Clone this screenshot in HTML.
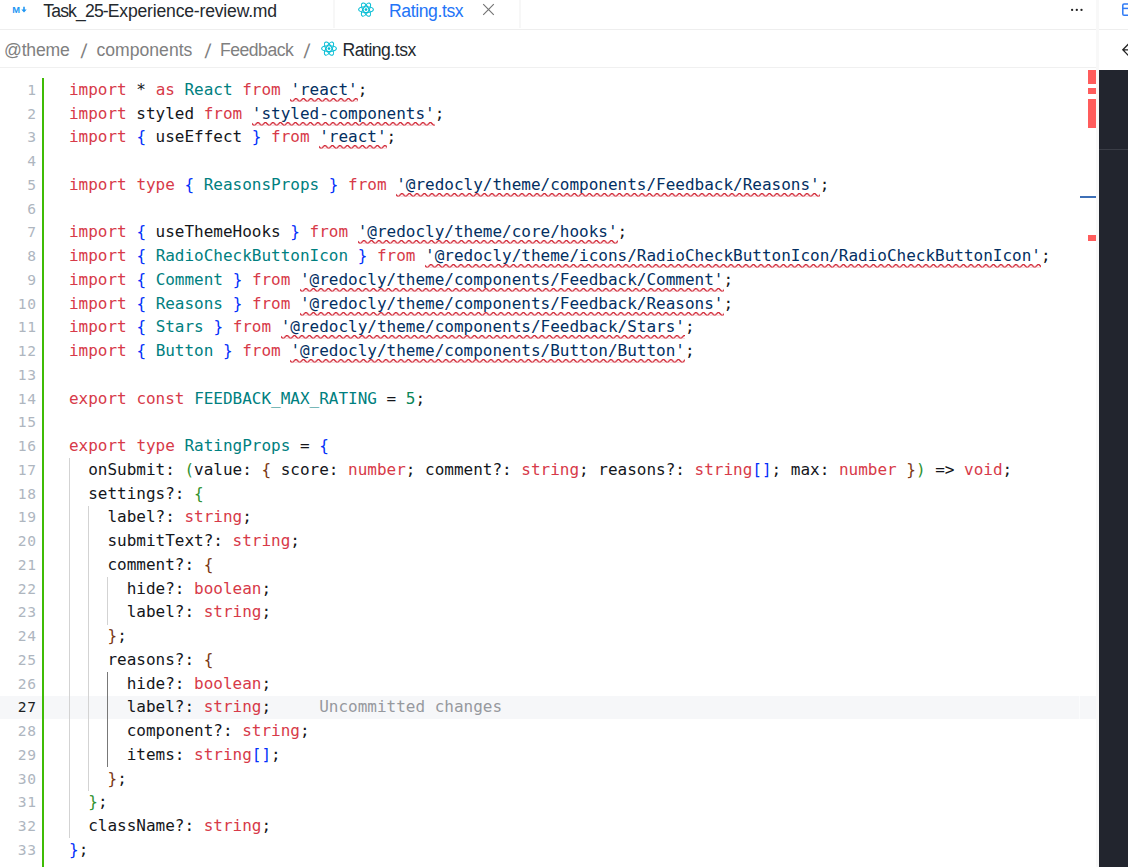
<!DOCTYPE html>
<html lang="en"><head><meta charset="utf-8"><title>Rating.tsx</title>
<style>
html,body{margin:0;padding:0;}
body{width:1128px;height:867px;overflow:hidden;background:#fff;position:relative;font-family:"Liberation Sans",sans-serif;}
.abs{position:absolute;}
#tabs{left:0;top:0;width:1128px;height:29px;border-bottom:1px solid #eeeeee;}
.tabsep{position:absolute;top:0;width:2px;height:28px;background:#f7f7f7;}
.tabtxt{position:absolute;font-size:17.6px;line-height:20px;white-space:nowrap;color:#24292e;}
#crumbs{left:0;top:30px;width:1096px;height:37px;border-bottom:1px solid #f0f0f0;}
.crumb{position:absolute;top:39.8px;font-size:17.6px;line-height:20px;color:#808080;white-space:nowrap;}
.crumb.sl{font-size:20px;top:41.2px;margin-left:0.6px;transform:skewX(-5deg);}
#code{left:69px;top:0;font-family:"DejaVu Sans Mono","Liberation Mono",monospace;font-size:16px;letter-spacing:-0.01px;line-height:23.75px;color:#14161b;white-space:pre;}
.ln{position:absolute;left:0;height:23.75px;}
#nums{left:0;top:0;width:36.7px;font-family:"DejaVu Sans Mono","Liberation Mono",monospace;font-size:14.6px;letter-spacing:0.7px;line-height:23.75px;color:#aeb6bf;text-align:right;}
.num{position:absolute;right:0;height:23.75px;}
.num.cur{color:#1b1f23;}
.k{color:#d73a49;}
.s{color:#032f62;}
.t{color:#008080;}
.b1{color:#0431fa;}
.b2{color:#319331;}
.b3{color:#7b3814;}
.n{color:#098658;}
.g{color:#96999e;}
.q{text-decoration:underline wavy #e0242f 1px;text-underline-offset:4px;text-decoration-skip-ink:none;}
#curline{left:0;top:696px;width:1096px;height:23px;background:#f6f7f9;}
#gitbar{left:42px;top:78px;width:2px;height:789px;background:#3fbc05;}
.guide{position:absolute;width:1px;background:#d3d3d3;}
.guide.act{background:#787878;}
#vsep{left:1096px;top:0;width:3px;height:867px;background:#f8f8f8;}
#rpanel{left:1099px;top:70px;width:29px;height:797px;background:#22252e;}
#rline{left:1099px;top:149px;width:29px;height:1px;background:#3a3d46;}
.mk{position:absolute;background:#ff5c5c;}
</style></head><body>
<div id="curline" class="abs"></div>
<div id="tabs" class="abs"></div>
<div class="tabsep" style="left:333px"></div>
<div class="tabsep" style="left:519px"></div>
<div class="tabtxt" style="left:43.3px;top:0.8px;letter-spacing:-0.2px"><span style="letter-spacing:-0.86px">Task_25-</span>Experience-review.md</div>
<div class="tabtxt" style="left:389px;top:0.8px;color:#2374f7;letter-spacing:-0.4px">Rating.tsx</div>
<svg class="abs" style="left:10px;top:4px" width="20" height="12" viewBox="0 0 20 12"><text x="2.2" y="8.6" font-family="Liberation Sans,sans-serif" font-weight="bold" font-size="8.6" textLength="7.8" lengthAdjust="spacingAndGlyphs" fill="#2196f3">M</text><path d="M13.2 2.7h1.6v2.9h1.9l-2.7 3-2.7-3h1.9z" fill="#2196f3"/></svg>
<svg class="abs" style="left:357.8px;top:1.9px" viewBox="-11.5 -10.9 23 21.8" width="16" height="15.2"><circle r="1.9" fill="#00bcd4"/><g stroke="#00bcd4" stroke-width="1.5" fill="none"><ellipse rx="10.6" ry="4.1"/><ellipse rx="10.6" ry="4.1" transform="rotate(60)"/><ellipse rx="10.6" ry="4.1" transform="rotate(120)"/></g></svg>
<svg class="abs" style="left:482px;top:3px" width="13" height="13" viewBox="0 0 13 13"><path d="M1.2 1.2l10.6 10.6M11.8 1.2l-10.6 10.6" stroke="#747474" stroke-width="1.15" fill="none"/></svg>
<svg class="abs" style="left:1066px;top:4px" width="22" height="12" viewBox="0 0 22 12"><circle cx="6.1" cy="5.9" r="1.15" fill="#222"/><circle cx="10.8" cy="5.9" r="1.15" fill="#222"/><circle cx="15.5" cy="5.9" r="1.15" fill="#222"/></svg>
<div id="crumbs" class="abs"></div>
<div class="crumb" style="left:4px;letter-spacing:-0.2px">@theme</div>
<div class="crumb sl" style="left:80px">/</div>
<div class="crumb" style="left:96.5px;letter-spacing:0px">components</div>
<div class="crumb sl" style="left:204px">/</div>
<div class="crumb" style="left:220px;letter-spacing:-0.5px">Feedback</div>
<div class="crumb sl" style="left:303px">/</div>
<svg class="abs" style="left:320.5px;top:41.3px" viewBox="-11.5 -10.9 23 21.8" width="16" height="15.2"><circle r="1.9" fill="#00bcd4"/><g stroke="#00bcd4" stroke-width="1.5" fill="none"><ellipse rx="10.6" ry="4.1"/><ellipse rx="10.6" ry="4.1" transform="rotate(60)"/><ellipse rx="10.6" ry="4.1" transform="rotate(120)"/></g></svg>
<div class="crumb" style="left:342.5px;color:#24292e;letter-spacing:-0.5px">Rating.tsx</div>
<div id="gitbar" class="abs"></div>
<div class="guide " style="left:69px;top:458.25px;height:380.0px"></div><div class="guide " style="left:88px;top:505.75px;height:285.0px"></div><div class="guide " style="left:107px;top:577.0px;height:47.5px"></div><div class="guide act" style="left:107px;top:672.0px;height:95.0px"></div>
<svg class="abs" style="left:0;top:0" width="1096" height="867" viewBox="0 0 1096 867"><defs><pattern id="sq" width="7.5" height="3.75" patternUnits="userSpaceOnUse"><g fill="#cf1b2b" transform="scale(1.25)"><polygon points="5.5,0 2.5,3 1.1,3 4.1,0"/><polygon points="4,0 6,2 6,0.6 5.4,0"/><polygon points="0,2 1,3 2.4,3 0,0.6"/></g></pattern></defs><g transform="translate(290.00,98.00)"><rect width="68.00" height="3.75" fill="url(#sq)"/></g><g transform="translate(252.00,122.00)"><rect width="183.00" height="3.75" fill="url(#sq)"/></g><g transform="translate(319.00,145.00)"><rect width="68.00" height="3.75" fill="url(#sq)"/></g><g transform="translate(396.00,193.00)"><rect width="424.00" height="3.75" fill="url(#sq)"/></g><g transform="translate(358.00,240.00)"><rect width="260.00" height="3.75" fill="url(#sq)"/></g><g transform="translate(425.00,264.00)"><rect width="616.00" height="3.75" fill="url(#sq)"/></g><g transform="translate(300.00,288.00)"><rect width="424.00" height="3.75" fill="url(#sq)"/></g><g transform="translate(300.00,312.00)"><rect width="424.00" height="3.75" fill="url(#sq)"/></g><g transform="translate(281.00,335.00)"><rect width="404.00" height="3.75" fill="url(#sq)"/></g><g transform="translate(290.00,359.00)"><rect width="395.00" height="3.75" fill="url(#sq)"/></g></svg>
<div id="nums" class="abs">
<div class="num" style="top:78px">1</div>
<div class="num" style="top:102px">2</div>
<div class="num" style="top:125px">3</div>
<div class="num" style="top:149px">4</div>
<div class="num" style="top:173px">5</div>
<div class="num" style="top:197px">6</div>
<div class="num" style="top:220px">7</div>
<div class="num" style="top:244px">8</div>
<div class="num" style="top:268px">9</div>
<div class="num" style="top:292px">10</div>
<div class="num" style="top:315px">11</div>
<div class="num" style="top:339px">12</div>
<div class="num" style="top:363px">13</div>
<div class="num" style="top:387px">14</div>
<div class="num" style="top:410px">15</div>
<div class="num" style="top:434px">16</div>
<div class="num" style="top:458px">17</div>
<div class="num" style="top:482px">18</div>
<div class="num" style="top:505px">19</div>
<div class="num" style="top:529px">20</div>
<div class="num" style="top:553px">21</div>
<div class="num" style="top:577px">22</div>
<div class="num" style="top:600px">23</div>
<div class="num" style="top:624px">24</div>
<div class="num" style="top:648px">25</div>
<div class="num" style="top:672px">26</div>
<div class="num cur" style="top:695px">27</div>
<div class="num" style="top:719px">28</div>
<div class="num" style="top:743px">29</div>
<div class="num" style="top:767px">30</div>
<div class="num" style="top:790px">31</div>
<div class="num" style="top:814px">32</div>
<div class="num" style="top:838px">33</div>
</div>
<div id="code" class="abs"><div class="ln" style="top:78px"><span class="k">import</span> * <span class="k">as</span> <span class="t">React</span> <span class="k">from</span> <span class="s">'react'</span>;</div><div class="ln" style="top:102px"><span class="k">import</span> styled <span class="k">from</span> <span class="s">'styled-components'</span>;</div><div class="ln" style="top:125px"><span class="k">import</span> <span class="b1">{</span> useEffect <span class="b1">}</span> <span class="k">from</span> <span class="s">'react'</span>;</div><div class="ln" style="top:149px"></div><div class="ln" style="top:173px"><span class="k">import</span> <span class="k">type</span> <span class="b1">{</span> <span class="t">ReasonsProps</span> <span class="b1">}</span> <span class="k">from</span> <span class="s">'@redocly/theme/components/Feedback/Reasons'</span>;</div><div class="ln" style="top:197px"></div><div class="ln" style="top:220px"><span class="k">import</span> <span class="b1">{</span> useThemeHooks <span class="b1">}</span> <span class="k">from</span> <span class="s">'@redocly/theme/core/hooks'</span>;</div><div class="ln" style="top:244px"><span class="k">import</span> <span class="b1">{</span> <span class="t">RadioCheckButtonIcon</span> <span class="b1">}</span> <span class="k">from</span> <span class="s">'@redocly/theme/icons/RadioCheckButtonIcon/RadioCheckButtonIcon'</span>;</div><div class="ln" style="top:268px"><span class="k">import</span> <span class="b1">{</span> <span class="t">Comment</span> <span class="b1">}</span> <span class="k">from</span> <span class="s">'@redocly/theme/components/Feedback/Comment'</span>;</div><div class="ln" style="top:292px"><span class="k">import</span> <span class="b1">{</span> <span class="t">Reasons</span> <span class="b1">}</span> <span class="k">from</span> <span class="s">'@redocly/theme/components/Feedback/Reasons'</span>;</div><div class="ln" style="top:315px"><span class="k">import</span> <span class="b1">{</span> <span class="t">Stars</span> <span class="b1">}</span> <span class="k">from</span> <span class="s">'@redocly/theme/components/Feedback/Stars'</span>;</div><div class="ln" style="top:339px"><span class="k">import</span> <span class="b1">{</span> <span class="t">Button</span> <span class="b1">}</span> <span class="k">from</span> <span class="s">'@redocly/theme/components/Button/Button'</span>;</div><div class="ln" style="top:363px"></div><div class="ln" style="top:387px"><span class="k">export</span> <span class="k">const</span> <span class="t">FEEDBACK_MAX_RATING</span> = <span class="n">5</span>;</div><div class="ln" style="top:410px"></div><div class="ln" style="top:434px"><span class="k">export</span> <span class="k">type</span> <span class="t">RatingProps</span> = <span class="b1">{</span></div><div class="ln" style="top:458px">  onSubmit: <span class="b2">(</span>value: <span class="b3">{</span> score: <span class="k">number</span>; comment?: <span class="k">string</span>; reasons?: <span class="k">string</span><span class="b1">[]</span>; max: <span class="k">number</span> <span class="b3">}</span><span class="b2">)</span> =&gt; <span class="k">void</span>;</div><div class="ln" style="top:482px">  settings?: <span class="b2">{</span></div><div class="ln" style="top:505px">    label?: <span class="k">string</span>;</div><div class="ln" style="top:529px">    submitText?: <span class="k">string</span>;</div><div class="ln" style="top:553px">    comment?: <span class="b3">{</span></div><div class="ln" style="top:577px">      hide?: <span class="k">boolean</span>;</div><div class="ln" style="top:600px">      label?: <span class="k">string</span>;</div><div class="ln" style="top:624px">    <span class="b3">}</span>;</div><div class="ln" style="top:648px">    reasons?: <span class="b3">{</span></div><div class="ln" style="top:672px">      hide?: <span class="k">boolean</span>;</div><div class="ln" style="top:695px">      label?: <span class="k">string</span>;<span class="g">     Uncommitted changes</span></div><div class="ln" style="top:719px">      component?: <span class="k">string</span>;</div><div class="ln" style="top:743px">      items: <span class="k">string</span><span class="b1">[]</span>;</div><div class="ln" style="top:767px">    <span class="b3">}</span>;</div><div class="ln" style="top:790px">  <span class="b2">}</span>;</div><div class="ln" style="top:814px">  className?: <span class="k">string</span>;</div><div class="ln" style="top:838px"><span class="b1">}</span>;</div></div>
<div class="mk" style="left:1088.4px;top:70px;width:7.6px;height:13.8px"></div>
<div class="mk" style="left:1088.4px;top:88.1px;width:7.6px;height:5.8px"></div>
<div class="mk" style="left:1088.4px;top:98.8px;width:7.6px;height:29.2px"></div>
<div class="mk" style="left:1088.4px;top:234.9px;width:7.6px;height:6.2px"></div>
<div class="abs" style="left:1080px;top:195.7px;width:16px;height:2.2px;background:#3d6fb6"></div>
<div class="abs" style="left:1079px;top:696px;width:1px;height:23px;background:#fbfcfd"></div>
<div id="vsep" class="abs"></div>
<div id="rpanel" class="abs"></div>
<div id="rline" class="abs"></div>
<svg class="abs" style="left:1111px;top:0" width="17" height="70" viewBox="0 0 17 70"><rect x="11.8" y="4" width="12" height="11.2" rx="1.3" fill="none" stroke="#2f7bf6" stroke-width="1.5"/><path d="M11.8 8.4h8" stroke="#2f7bf6" stroke-width="1.5"/><path d="M17.6 43.9l-5.8 5.9 5.8 5.9M12 49.8h6" stroke="#222" stroke-width="1.3" fill="none"/></svg>
</body></html>
